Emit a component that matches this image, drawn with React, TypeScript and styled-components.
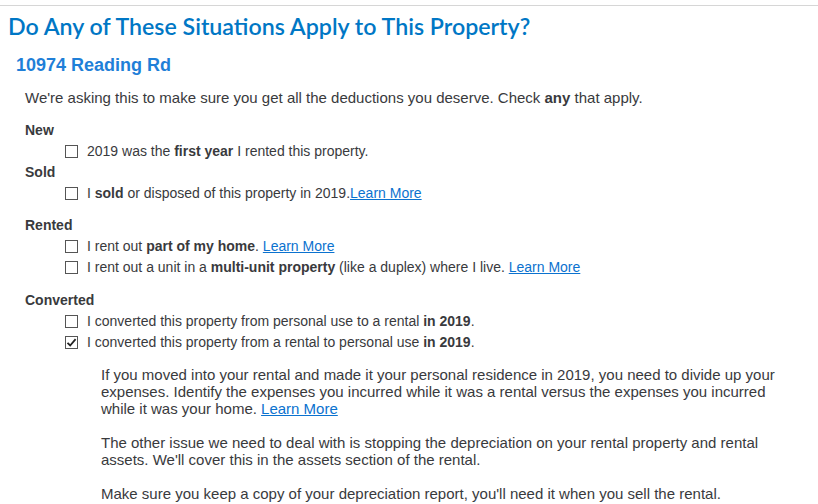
import styled, { createGlobalStyle } from "styled-components";

const GlobalStyle = createGlobalStyle`
  body {
    margin: 0;
    background: #ffffff;
    font-family: "Liberation Sans", Arial, sans-serif;
    color: #393a3d;
  }
`;

const Page = styled.div`
  display: flex;
  flex-direction: column;
  border-top: 1px solid #d6d6d6;
  margin-top: 5px;
  padding-bottom: 20px;
`;

const Title = styled.h1`
  margin: 6px 0 0 8px;
  font-family: "Lato", "Open Sans", sans-serif;
  font-size: 23.2px;
  font-weight: 600;
  line-height: 28px;
  color: #0077c5;
`;

const Address = styled.h2`
  margin: 14px 0 0 16px;
  font-size: 18px;
  font-weight: bold;
  line-height: 22px;
  color: #1f7fd8;
`;

const Intro = styled.p`
  margin: 13px 0 0 25px;
  font-size: 15px;
  line-height: 17px;
`;

const Section = styled.div<{ $gap: number }>`
  display: flex;
  flex-direction: column;
  gap: 4px;
  margin: ${(p) => p.$gap}px 0 0 25px;
`;

const SectionTitle = styled.div`
  font-size: 14px;
  font-weight: bold;
  line-height: 17px;
`;

const OptionRow = styled.div`
  display: flex;
  align-items: center;
  gap: 9px;
  margin-left: 40px;
  font-size: 14px;
  line-height: 17px;
`;

const Box = styled.span`
  display: inline-flex;
  align-items: center;
  justify-content: center;
  box-sizing: border-box;
  width: 13px;
  height: 13px;
  border: 1px solid #555;
  background: #fff;
  flex: none;
`;

const LearnMore = styled.a`
  color: #0b72cf;
  text-decoration: underline;
`;

const Details = styled.div`
  margin: 15px 40px 0 101px;
  font-size: 15px;
  line-height: 17px;

  p {
    margin: 0 0 17px;
  }

  p + p {
    margin-top: 1px;
  }
`;

type Option = {
  id: string;
  checked?: boolean;
  content: React.ReactNode;
};

type Group = {
  title: string;
  gap: number;
  options: Option[];
};

const groups: Group[] = [
  {
    title: "New",
    gap: 16,
    options: [
      {
        id: "first-year",
        content: (
          <>
            2019 was the <b>first year</b> I rented this property.
          </>
        ),
      },
    ],
  },
  {
    title: "Sold",
    gap: 4,
    options: [
      {
        id: "sold",
        content: (
          <>
            I <b>sold</b> or disposed of this property in 2019.<LearnMore href="#">Learn More</LearnMore>
          </>
        ),
      },
    ],
  },
  {
    title: "Rented",
    gap: 15,
    options: [
      {
        id: "part-home",
        content: (
          <>
            I rent out <b>part of my home</b>. <LearnMore href="#">Learn More</LearnMore>
          </>
        ),
      },
      {
        id: "multi-unit",
        content: (
          <>
            I rent out a unit in a <b>multi-unit property</b> (like a duplex) where I live.{" "}
            <LearnMore href="#">Learn More</LearnMore>
          </>
        ),
      },
    ],
  },
  {
    title: "Converted",
    gap: 16,
    options: [
      {
        id: "to-rental",
        content: (
          <>
            I converted this property from personal use to a rental <b>in 2019</b>.
          </>
        ),
      },
      {
        id: "to-personal",
        checked: true,
        content: (
          <>
            I converted this property from a rental to personal use <b>in 2019</b>.
          </>
        ),
      },
    ],
  },
];

const CheckMark = () => (
  <svg width="11" height="11" viewBox="0 0 11 11">
    <path d="M1.5 5.8 L4.2 8.5 L9.6 2.2" fill="none" stroke="#222" strokeWidth="1.8" />
  </svg>
);

export default function App() {
  return (
    <Page>
      <GlobalStyle />
      <Title>Do Any of These Situations Apply to This Property?</Title>
      <Address>10974 Reading Rd</Address>
      <Intro>
        We're asking this to make sure you get all the deductions you deserve. Check <b>any</b> that apply.
      </Intro>
      {groups.map((group) => (
        <Section key={group.title} $gap={group.gap}>
          <SectionTitle>{group.title}</SectionTitle>
          {group.options.map((option) => (
            <OptionRow key={option.id}>
              <Box>{option.checked && <CheckMark />}</Box>
              <span>{option.content}</span>
            </OptionRow>
          ))}
        </Section>
      ))}
      <Details>
        <p>
          If you moved into your rental and made it your personal residence in 2019, you need to divide up your
          expenses. Identify the expenses you incurred while it was a rental versus the expenses you incurred
          while it was your home. <LearnMore href="#">Learn More</LearnMore>
        </p>
        <p>
          The other issue we need to deal with is stopping the depreciation on your rental property and rental
          assets. We'll cover this in the assets section of the rental.
        </p>
        <p>Make sure you keep a copy of your depreciation report, you'll need it when you sell the rental.</p>
      </Details>
    </Page>
  );
}
